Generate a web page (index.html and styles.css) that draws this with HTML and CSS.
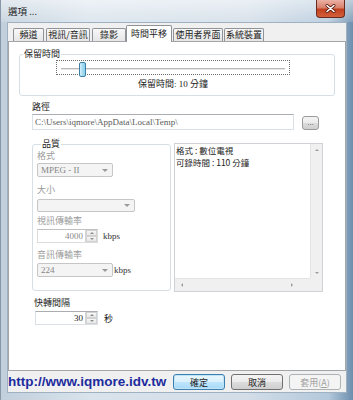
FILE: index.html
```html
<!doctype html>
<html lang="zh-Hant">
<head>
    <meta charset="UTF-8">
    <title>選項</title>
    <link rel="stylesheet" href="styles.css">
</head>
<body>
<div class="window">
    <div class="titlebar">
        <span class="title">選項 ...</span>
        <span class="close">
            <svg width="11" height="9" viewBox="0 0 11 9"><path d="M2 1.5 L9 7.5 M9 1.5 L2 7.5" stroke="#5a1a10" stroke-width="3" stroke-linecap="round"/><path d="M2 1.5 L9 7.5 M9 1.5 L2 7.5" stroke="#fff" stroke-width="1.6" stroke-linecap="round"/></svg>
        </span>
    </div>
    <div class="client">
        <div class="tabs">
            <span class="tab">頻道</span>
            <span class="tab">視訊/音訊</span>
            <span class="tab">錄影</span>
            <span class="tab active">時間平移</span>
            <span class="tab">使用者界面</span>
            <span class="tab">系統裝置</span>
        </div>
        <div class="panel">
            <fieldset class="group keep">
                <legend>保留時間</legend>
                <div class="slider"><span class="thumb"></span></div>
                <div class="slider-value">保留時間: 10 分鐘</div>
            </fieldset>

            <div class="path">
                <div class="label">路徑</div>
                <div class="path-row">
                    <div class="textbox">C:\Users\iqmore\AppData\Local\Temp\</div>
                    <div class="btn browse">...</div>
                </div>
            </div>

            <div class="quality-row">
                <fieldset class="group quality">
                    <legend>品質</legend>
                    <div class="label off">格式</div>
                    <div class="combo w76 first"><span>MPEG - II</span><i class="arrow"></i></div>
                    <div class="label off size">大小</div>
                    <div class="combo w98 short"><span></span><i class="arrow"></i></div>
                    <div class="label off vrate">視訊傳輸率</div>
                    <div class="unit-row">
                        <div class="spin w61"><span>4000</span><b class="spin-btns"><i class="up"></i><i class="down"></i></b></div>
                        <span class="unit">kbps</span>
                    </div>
                    <div class="label off arate">音訊傳輸率</div>
                    <div class="unit-row">
                        <div class="combo w76"><span>224</span><i class="arrow"></i></div>
                        <span class="unit">kbps</span>
                    </div>
                </fieldset>
                <div class="listbox">
                    <div class="list-text"><p>格式 : 數位電視</p><p>可錄時間 : 110 分鐘</p></div>
                    <div class="vscroll"><i class="up"></i><i class="down"></i></div>
                    <div class="hscroll"><i class="left"></i><i class="right"></i></div>
                    <div class="corner"></div>
                </div>
            </div>

            <div class="label skip">快轉間隔</div>
            <div class="unit-row skip-row">
                <div class="spin w63 on"><span>30</span><b class="spin-btns"><i class="up"></i><i class="down"></i></b></div>
                <span class="unit">秒</span>
            </div>
        </div>
        <div class="footer">
            <span class="url">http://www.iqmore.idv.tw</span>
            <span class="btn default">確定</span>
            <span class="btn">取消</span>
            <span class="btn disabled">套用(<u>A</u>)</span>
        </div>
    </div>
</div>
</body>
</html>
```

FILE: styles.css
```css
*{margin: 0; padding: 0; box-sizing: border-box;}
html, body{width: 100%; height: 100%;}
body{font-family: "Liberation Serif", "Noto Sans CJK TC", serif; font-size: 9px; color: #000; background: #fff;}

/* window frame */
.window{width: 353px; height: 400px; display: flex; flex-direction: column; border-left: 1px solid #8797a7;
    background: linear-gradient(90deg, #c1cfdc 0, #d8e3ec 25%, #d2dde8 70%, #b3c8db 93%, #6d8fae 100%);}
.titlebar{height: 22px; display: flex; justify-content: space-between; align-items: flex-start; padding-left: 7px;
    background: linear-gradient(rgba(255,255,255,.55), rgba(255,255,255,.15));}
.title{margin-top: 5px; font-family: "Noto Sans CJK TC", sans-serif; font-size: 9.5px; line-height: 12px; color: #1a1a1a;}
.close{width: 29px; height: 18px; margin-right: 8px; display: flex; justify-content: center; align-items: center;
    border: 1px solid #6b2a1e; border-top: none; border-radius: 0 0 4px 4px;
    background: linear-gradient(#eab1a4 0, #d9826e 45%, #c2401f 55%, #d3603c 100%);}

.client{flex: 1; margin: 0 6px 7px 6px; background: #f0f0f0; border: 1px solid #9fb0c1; display: flex; flex-direction: column;}

/* tabs */
.tabs{display: flex; align-items: flex-end; height: 17px; margin-top: 1px; padding-left: 5px; position: relative; z-index: 1;}
.tab{height: 13px; margin-right: 2px; border: 1px solid #8f9297; border-bottom: none; border-radius: 2px 2px 0 0;
    background: linear-gradient(#f8f8f8, #e6e6e6); font-family: "Noto Sans CJK TC", sans-serif;
    font-size: 9px; line-height: 12px; text-align: center; color: #222;}
.tab:nth-child(1){width: 31px;}
.tab:nth-child(2){width: 44px;}
.tab:nth-child(3){width: 34px; margin-right: 0;}
.tab:nth-child(4){width: 46px; margin-right: 1px;}
.tab:nth-child(5){width: 50px; margin-right: 1px;}
.tab:nth-child(6){width: 40px;}
.tab.active{height: 17px; background: #fff; line-height: 15px; margin-bottom: -1px;}

.panel{flex: 1; background: #fff; border: 1px solid #a3a5a9; padding-top: 6px;}

/* groups */
.group{border: 1px solid #d5dfe5; border-radius: 3px; padding: 0;}
.group legend{font-family: "Noto Sans CJK TC", sans-serif; font-size: 9px; line-height: 12px; padding: 0 1px; margin-left: 3px; color: #222;}
.keep{margin: 0 10px; padding-bottom: 5px;}

.slider{width: 234px; height: 15px; margin-left: 36px; border: 1px dotted #6d6d6d; display: flex;
    background: linear-gradient(#b9b9b9, #b9b9b9) no-repeat 4px 7px / 224px 1px,
                linear-gradient(#e6e6e6, #e6e6e6) no-repeat 4px 8px / 224px 1px;}
.thumb{width: 7px; height: 15px; margin: 1px 0 0 22px; border: 1px solid #3d7ea6; border-radius: 2px;
    background: linear-gradient(90deg, #d8f1fb, #a6dcf1 50%, #8fcfea);}
.slider-value{width: 234px; margin: 3px 0 0 36px; text-align: center; line-height: 12px; color: #222;}

.label{font-family: "Noto Sans CJK TC", sans-serif; font-size: 9px; line-height: 12px; color: #222;}
.label.off{color: #9b9b9b;}

.path{margin: 5px 0 0 23px;}
.path-row{display: flex; align-items: flex-start; margin-top: 1px;}
.textbox{width: 262px; height: 16px; border: 1px solid #dbdfe6; border-top-color: #abadb3; padding-left: 2px;
    line-height: 14px; color: #5a5a5a; white-space: nowrap; overflow: hidden;}

.btn{display: flex; justify-content: center; align-items: center; border: 1px solid #707070; border-radius: 3px;
    background: linear-gradient(#f4f4f4 0, #ebebeb 50%, #dddddd 50%, #cfcfcf 100%);
    font-family: "Noto Sans CJK TC", sans-serif; font-size: 9px; color: #222;}
.browse{width: 17px; height: 14px; margin: 2px 0 0 8px; border-color: #9a9a9a; font-family: "Liberation Sans", sans-serif; font-size: 8px; color: #555; line-height: 8px;}

/* quality */
.quality-row{display: flex; align-items: flex-start; margin: 8px 0 0 23px;}
.quality{width: 139px; height: 153px; padding-left: 4px;}
.quality legend{margin-left: 4px;}
.quality .label.size{margin-top: 7px;}
.quality .label.vrate{margin-top: 3px;}
.quality .label.arate{margin-top: 6px;}

.combo{height: 14px; margin-top: 1px; display: flex; align-items: center; justify-content: space-between;
    border: 1px solid #c6c6c6; border-radius: 2px; background: #f4f4f4; padding: 0 4px 0 3px; color: #858585;}
.combo.first{margin-top: 1px;}
.combo.short{height: 13px; margin-top: 3px;}
.w76{width: 76px;}
.w98{width: 98px;}
.w61{width: 61px;}
.w63{width: 63px;}
.arrow{width: 0; height: 0; border-left: 3px solid transparent; border-right: 3px solid transparent; border-top: 3px solid #9a9a9a;}

.unit-row{display: flex; align-items: center; margin-top: 2px;}
.unit{margin-left: 5px; color: #333;}
.unit-row .combo{margin-top: 0;}
.unit-row .combo + .unit{margin-left: 1px;}

.spin{height: 14px; display: flex; justify-content: flex-end; border: 1px solid #dcdcdc; border-top-color: #c0c0c0; background: #fff; color: #8a8a8a;}
.spin span{line-height: 12px; padding-right: 2px;}
.spin.on{color: #222; border-color: #dbdfe6; border-top-color: #abadb3;}
.spin-btns{width: 12px; display: flex; flex-direction: column; border-left: 1px solid #d5d5d5;}
.spin-btns i{flex: 1; display: flex; justify-content: center; align-items: center; background: linear-gradient(#f7f7f7, #e7e7e7); border: 1px solid #d2d2d2;}
.spin-btns i::after{content: ""; border-left: 2px solid transparent; border-right: 2px solid transparent;}
.spin-btns .up::after{border-bottom: 2px solid #8e8e8e;}
.spin-btns .down::after{border-top: 2px solid #8e8e8e;}

/* listbox */
.listbox{width: 149px; height: 149px; margin: 5px 0 0 3px; border: 1px solid #cfd3d8; display: grid;
    grid-template-columns: 1fr 12px; grid-template-rows: 1fr 13px;}
.list-text{padding: 0 0 0 1px; font-family: "Noto Sans CJK TC", sans-serif; font-size: 8.5px; color: #222;}
.list-text p{line-height: 12px; white-space: nowrap;}
.vscroll{background: #f0f0f0; border-left: 1px solid #e4e4e4; display: flex; flex-direction: column; justify-content: space-between; align-items: center; padding: 5px 0 4px;}
.hscroll{background: #f0f0f0; border-top: 1px solid #e4e4e4; display: flex; justify-content: space-between; align-items: center; padding: 0 17px 0 6px;}
.corner{background: #f0f0f0;}
.vscroll i, .hscroll i{width: 0; height: 0;}
.vscroll .up{border-left: 2px solid transparent; border-right: 2px solid transparent; border-bottom: 2px solid #9c9c9c;}
.vscroll .down{border-left: 2px solid transparent; border-right: 2px solid transparent; border-top: 2px solid #9c9c9c;}
.hscroll .left{border-top: 2px solid transparent; border-bottom: 2px solid transparent; border-right: 2px solid #9c9c9c;}
.hscroll .right{border-top: 2px solid transparent; border-bottom: 2px solid transparent; border-left: 2px solid #9c9c9c;}

.label.skip{margin: 5px 0 0 25px;}
.skip-row{margin: 2px 0 0 26px;}
.skip-row .unit{font-family: "Noto Sans CJK TC", sans-serif; margin-left: 6px; color: #222;}

/* footer */
.footer{height: 21px; display: flex; align-items: flex-start; padding: 3px 5px 0 0;}
.url{margin: 0 auto 0 0; font-family: "Liberation Sans", sans-serif; font-weight: bold; font-size: 13.5px; line-height: 16px; color: #1d2c9e;}
.footer .btn{width: 52px; height: 16px; margin-left: 6px;}
.footer .btn.default{border-color: #3c7fb1; box-shadow: inset 0 0 0 1px #c1e3f6;
    background: linear-gradient(#eaf6fd 0, #d9f0fc 50%, #bee6fd 50%, #a7d9f5 100%);}
.footer .btn.disabled{border-color: #adb2b5; background: #f4f4f4; color: #a0a0a0;}
.btn u{text-decoration: underline;}
```
